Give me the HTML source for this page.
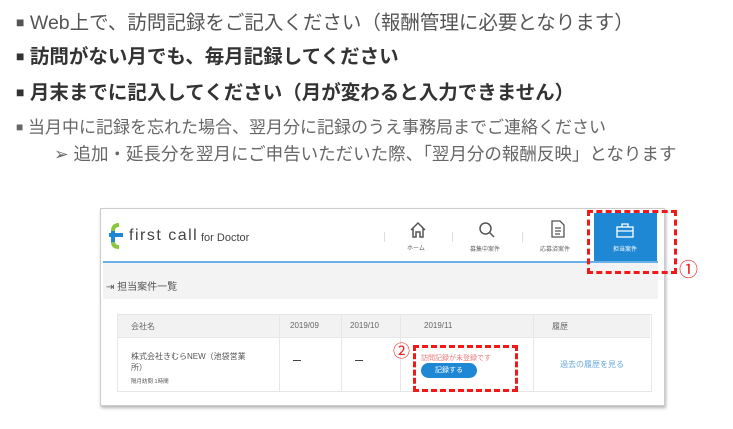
<!DOCTYPE html>
<html><head><meta charset="utf-8"><style>
body{margin:0;width:733px;height:429px;background:#fff;position:relative;overflow:hidden;font-family:"Liberation Sans","Noto Sans CJK JP",sans-serif;}
.a{position:absolute;white-space:nowrap;}
.l{color:#555;}
</style></head><body>
<div class="a l" style="left:16px;top:6px;font-size:19.5px;"><span style="font-size:14px;vertical-align:2px">■</span> Web上で、訪問記録をご記入ください（報酬管理に必要となります）</div>
<div class="a" style="left:16px;top:40px;font-size:19.5px;font-weight:bold;color:#333;"><span style="font-size:14px;vertical-align:2px">■</span> 訪問がない月でも、毎月記録してください</div>
<div class="a" style="left:16px;top:76px;font-size:19.5px;font-weight:bold;color:#333;"><span style="font-size:14px;vertical-align:2px">■</span> 月末までに記入してください（月が変わると入力できません）</div>
<div class="a l" style="left:16px;top:113px;font-size:17px;color:#666;"><span style="font-size:12px;vertical-align:2px">■</span> 当月中に記録を忘れた場合、翌月分に記録のうえ事務局までご連絡ください</div>
<div class="a l" style="left:54px;top:141px;font-size:17.5px;color:#666;">➢ 追加・延長分を翌月にご申告いただいた際、「翌月分の報酬反映」となります</div>

<div class="a" style="left:100px;top:208px;width:563px;height:196px;border:1px solid #ccc;box-shadow:1px 2px 3px rgba(0,0,0,.3);background:#fff;"></div>
<svg class="a" style="left:108px;top:222px" width="16" height="28" viewBox="0 0 16 28"><path d="M11 3 Q5 3 5 9 V20 Q5 25 11 25" stroke="#8cc63f" stroke-width="4" fill="none"/><rect x="1" y="11" width="14" height="4" fill="#1e88d4"/><path d="M5 9 V20" stroke="#1e88d4" stroke-width="4"/></svg>
<div class="a" style="left:129px;top:227px;font-size:16px;color:#444;letter-spacing:1.5px;">first call</div>
<div class="a" style="left:201px;top:232px;font-size:11px;color:#444;">for Doctor</div>
<div class="a" style="left:103px;top:261px;width:555px;height:2px;background:#6ab0e8;"></div>
<div class="a" style="left:103px;top:263px;width:555px;height:36px;background:#f3f3f3;"></div>
<div class="a" style="left:106px;top:278px;font-size:10px;color:#555;">⇥ 担当案件一覧</div>
<div class="a" style="left:384px;top:232px;width:1px;height:10px;background:#ddd"></div>
<div class="a" style="left:452px;top:232px;width:1px;height:10px;background:#ddd"></div>
<div class="a" style="left:522px;top:232px;width:1px;height:10px;background:#ddd"></div>
<svg class="a" style="left:409px;top:221px" width="18" height="18" viewBox="0 0 18 18"><path d="M2 9 L9 2 L16 9 M4 7 V16 H7 V11 H11 V16 H14 V7" stroke="#555" stroke-width="1.5" fill="none"/></svg>
<div class="a" style="left:407px;top:243px;font-size:6px;color:#666">ホーム</div>
<svg class="a" style="left:478px;top:221px" width="18" height="18" viewBox="0 0 18 18"><circle cx="7.5" cy="7.5" r="5.5" stroke="#555" stroke-width="1.5" fill="none"/><path d="M11.5 11.5 L16 16" stroke="#555" stroke-width="1.5"/></svg>
<div class="a" style="left:470px;top:244px;font-size:6px;color:#666">募集中案件</div>
<svg class="a" style="left:551px;top:220px" width="14" height="18" viewBox="0 0 14 18"><path d="M1 1 H9 L13 5 V17 H1 Z M4 8 H10 M4 11 H10 M4 14 H9" stroke="#555" stroke-width="1.3" fill="none"/></svg>
<div class="a" style="left:540px;top:244px;font-size:6px;color:#666">応募済案件</div>
<div class="a" style="left:594px;top:213px;width:63px;height:48px;background:#1e88d4"></div>
<svg class="a" style="left:616px;top:223px" width="18" height="15" viewBox="0 0 18 15"><rect x="1" y="4" width="16" height="10" stroke="#fff" stroke-width="1.3" fill="none"/><path d="M6 4 V1 H12 V4 M1 8 H17" stroke="#fff" stroke-width="1.3" fill="none"/></svg>
<div class="a" style="left:613px;top:244px;font-size:6px;color:#fff">担当案件</div>
<div class="a" style="left:587px;top:210px;width:84px;height:58px;border:3px dashed #f01818;"></div>
<div class="a" style="left:679px;top:255px;font-size:19px;color:#f01818">①</div>
<div class="a" style="left:117px;top:314px;width:533px;height:76px;border:1px solid #e6e6e6;"></div>
<div class="a" style="left:118px;top:315px;width:532px;height:22px;background:#f2f2f2;border-bottom:1px solid #e6e6e6"></div>
<div class="a" style="left:279px;top:315px;width:1px;height:76px;background:#e6e6e6"></div>
<div class="a" style="left:341px;top:315px;width:1px;height:76px;background:#e6e6e6"></div>
<div class="a" style="left:400px;top:315px;width:1px;height:76px;background:#e6e6e6"></div>
<div class="a" style="left:533px;top:315px;width:1px;height:76px;background:#e6e6e6"></div>
<div class="a" style="left:131px;top:321px;font-size:8px;color:#666">会社名</div>
<div class="a" style="left:290px;top:321px;font-size:8px;color:#666">2019/09</div>
<div class="a" style="left:350px;top:321px;font-size:8px;color:#666">2019/10</div>
<div class="a" style="left:424px;top:321px;font-size:8px;color:#666">2019/11</div>
<div class="a" style="left:552px;top:321px;font-size:8px;color:#666">履歴</div>
<div class="a" style="left:131px;top:351px;font-size:8px;color:#555;line-height:11px">株式会社きむらNEW（池袋営業<br>所）</div>
<div class="a" style="left:131px;top:377px;font-size:5.5px;color:#555">隔月訪問 1時間</div>
<div class="a" style="left:293px;top:360px;width:8px;height:1px;background:#444"></div>
<div class="a" style="left:355px;top:360px;width:8px;height:1px;background:#444"></div>
<div class="a" style="left:421px;top:353px;font-size:7px;color:#e87b7b">訪問記録が未登録です</div>
<div class="a" style="left:421px;top:363px;width:56px;height:15px;border-radius:8px;background:#1e88d4;color:#fff;font-size:7px;text-align:center;line-height:15px">記録する</div>
<div class="a" style="left:560px;top:359px;font-size:8px;color:#6aa8dd">過去の履歴を見る</div>
<div class="a" style="left:413px;top:345px;width:99px;height:41px;border:3px dashed #f01818;"></div>
<div class="a" style="left:393px;top:337px;font-size:17px;color:#f01818">②</div>
</body></html>
